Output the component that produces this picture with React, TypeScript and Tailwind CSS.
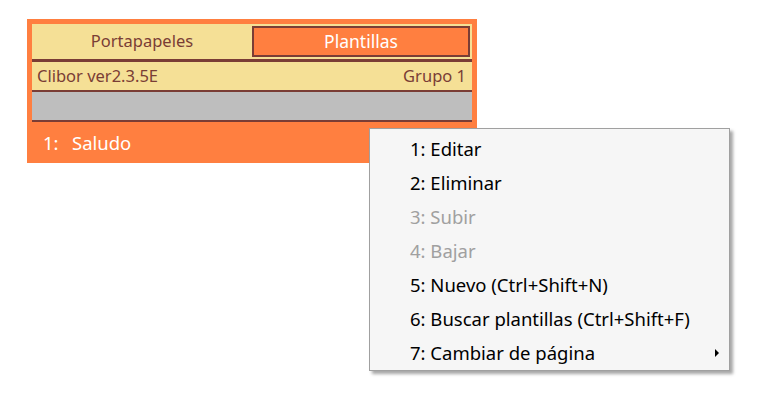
const menuItems = [
  { label: "1: Editar", disabled: false },
  { label: "2: Eliminar", disabled: false },
  { label: "3: Subir", disabled: true },
  { label: "4: Bajar", disabled: true },
  { label: "5: Nuevo (Ctrl+Shift+N)", disabled: false },
  { label: "6: Buscar plantillas (Ctrl+Shift+F)", disabled: false },
  { label: "7: Cambiar de página", disabled: false, submenu: true },
]

export default function App() {
  return (
    <div
      className="relative w-[758px] h-[396px] bg-white overflow-hidden"
      style={{ fontFamily: '"Noto Sans", "Open Sans", sans-serif' }}
    >
      {/* Clibor panel */}
      <div className="ml-[27px] mt-[19px] w-[450px] bg-[#ff7f40] px-[5px] pt-[5px]">
        <div className="flex h-[35px] bg-[#f5e096]">
          <div className="w-[220px] flex items-center justify-center text-[16.5px] text-[#7a3d35]">
            Portapapeles
          </div>
          <div className="mt-[2px] h-[31px] w-[218px] border-2 border-[#7a3d35] bg-[#ff7f40] flex items-center justify-center text-[17.5px] text-white">
            Plantillas
          </div>
        </div>
        <div className="h-[3px] bg-[#7a3d35]" />
        <div className="flex h-[28px] items-center justify-between bg-[#f5e096] pl-[5px] pr-[6px] text-[16.5px] text-[#7a3d35]">
          <span>Clibor ver2.3.5E</span>
          <span>Grupo 1</span>
        </div>
        <div className="h-[2px] bg-[#7a3d35]" />
        <div className="h-[28px] bg-[#bebebe]" />
        <div className="h-[2px] bg-[#7a3d35]" />
        <div className="flex h-[41px] items-center text-[18.5px] text-white">
          <span className="ml-[11px] w-[29px]">1:</span>
          <span>Saludo</span>
        </div>
      </div>

      {/* context menu */}
      <div className="absolute left-[369px] top-[128px] w-[361px] border border-[#a0a0a0] bg-[#f6f6f6] pt-[3px] shadow-[3px_3px_3px_rgba(0,0,0,0.35)]">
        {menuItems.map((item) => (
          <div
            key={item.label}
            className={`relative flex h-[34px] items-center pl-[40px] text-[18.5px] ${
              item.disabled ? "text-[#a0a0a0]" : "text-black"
            }`}
          >
            {item.label}
            {item.submenu && (
              <span className="absolute right-[10px] top-1/2 -translate-y-1/2 h-0 w-0 border-y-[4px] border-l-[4px] border-y-transparent border-l-black" />
            )}
          </div>
        ))}
      </div>
    </div>
  )
}
